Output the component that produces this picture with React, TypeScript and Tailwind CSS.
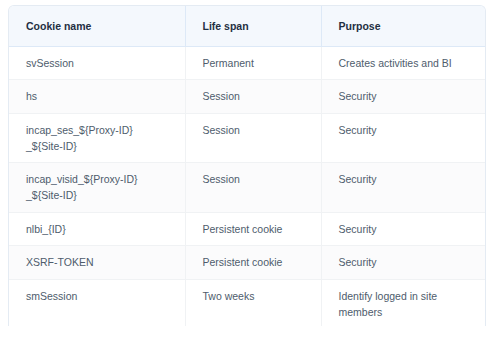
const rows: { name: React.ReactNode; span: string; purpose: string }[] = [
  { name: 'svSession', span: 'Permanent', purpose: 'Creates activities and BI' },
  { name: 'hs', span: 'Session', purpose: 'Security' },
  { name: <>incap_ses_${'{'}Proxy-ID{'}'}<br />_${'{'}Site-ID{'}'}</>, span: 'Session', purpose: 'Security' },
  { name: <>incap_visid_${'{'}Proxy-ID{'}'}<br />_${'{'}Site-ID{'}'}</>, span: 'Session', purpose: 'Security' },
  { name: 'nlbi_{ID}', span: 'Persistent cookie', purpose: 'Security' },
  { name: 'XSRF-TOKEN', span: 'Persistent cookie', purpose: 'Security' },
  { name: 'smSession', span: 'Two weeks', purpose: 'Identify logged in site members' },
];

export default function App() {
  return (
    <div className="w-[488px] h-[350px] bg-white pt-[5px] pl-2" style={{ fontFamily: '"Liberation Sans", Arial, sans-serif' }}>
      <div className="w-[478px] h-[321px] overflow-hidden rounded-t-md border border-b-0 border-[#e4ebf3]">
        <table className="w-full table-fixed border-collapse text-[10.5px] leading-4">
          <colgroup>
            <col className="w-[176px]" />
            <col className="w-[136px]" />
            <col />
          </colgroup>
          <thead>
            <tr className="h-[40px] bg-[#f4f8fd] border-b border-[#dde9f7] text-left text-[#1f2f42]">
              <th className="px-[17px] font-semibold">Cookie name</th>
              <th className="px-[17px] font-semibold border-l border-[#dde9f7]">Life span</th>
              <th className="px-[17px] font-semibold border-l border-[#dde9f7]">Purpose</th>
            </tr>
          </thead>
          <tbody className="text-[#4e5c6c]">
            {rows.map((r, i) => (
              <tr key={i} className={`border-b border-[#f0f2f4] align-top ${i % 2 === 1 ? 'bg-[#fbfbfc]' : 'bg-white'}`}>
                <td className="px-[17px] py-[8.25px]">{r.name}</td>
                <td className="px-[17px] py-[8.25px] border-l border-[#f0f2f4]">{r.span}</td>
                <td className="px-[17px] py-[8.25px] border-l border-[#f0f2f4]">{r.purpose}</td>
              </tr>
            ))}
          </tbody>
        </table>
      </div>
    </div>
  );
}
